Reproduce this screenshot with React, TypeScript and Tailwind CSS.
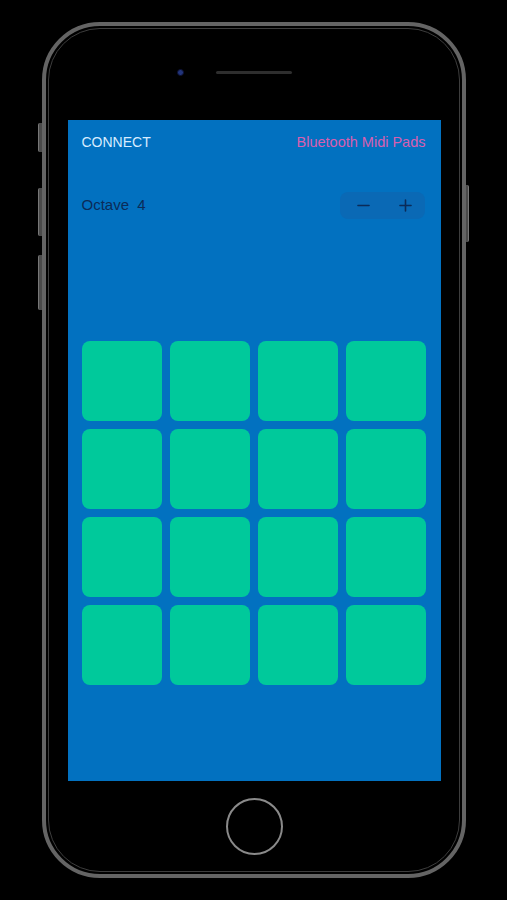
import { Minus, Plus } from 'lucide-react'

const PADS = Array.from({ length: 16 }, (_, i) => i)

export default function App() {
  return (
    <div className="w-[507px] h-[900px] bg-black flex pl-[42px] pt-[22px]" style={{ fontFamily: '"Liberation Sans", Arial, sans-serif' }}>
      <div className="relative w-[424px] h-[856px]">
        {/* side buttons */}
        <div className="absolute left-[-4px] top-[101px] w-[4px] h-[29px] rounded-l-[2px] bg-[#4a4a4a] border-l border-[#777]" />
        <div className="absolute left-[-4px] top-[166px] w-[4px] h-[48px] rounded-l-[2px] bg-[#4a4a4a] border-l border-[#777]" />
        <div className="absolute left-[-4px] top-[233px] w-[4px] h-[55px] rounded-l-[2px] bg-[#4a4a4a] border-l border-[#777]" />
        <div className="absolute right-[-3px] top-[163px] w-[3px] h-[57px] rounded-r-[2px] bg-[#4a4a4a] border-r border-[#777]" />

        {/* frame */}
        <div className="h-full rounded-[58px] border-[4px] border-[#646464] bg-black p-[2px]">
          <div className="h-full rounded-[52px] border border-[#3d3d3d] flex flex-col items-center">
            {/* top bezel */}
            <div className="h-[91px] pt-[40px] flex items-start gap-[32px]">
              <div className="w-[7px] h-[7px] rounded-full bg-[#22347a] border border-[#0c1030]" />
              <div className="mt-[2px] w-[76px] h-[3px] rounded-full bg-[#2e2e2e]" />
              <div className="w-[7px] h-[7px]" />
            </div>

            {/* screen */}
            <div className="w-[373px] h-[661px] bg-[#0271c0] pl-[14px] pr-[15px] pt-[13px]">
              <div className="flex items-center justify-between h-[18px] leading-[18px]">
                <span className="text-[14px] text-[#d8ecff]">CONNECT</span>
                <span className="text-[14.5px] text-[#d85fb0]">Bluetooth Midi Pads</span>
              </div>

              <div className="mt-[41px] flex items-center justify-between h-[27px]">
                <span className="text-[15px] text-[#0b2b58] whitespace-pre">Octave  4</span>
                <div className="flex h-[27px] w-[85px] rounded-[8px] bg-[#0a69b5] mr-[1px]">
                  <button className="flex-1 flex items-center justify-center pl-[5px] text-[#0b2b58]">
                    <Minus size={19} strokeWidth={2} />
                  </button>
                  <button className="flex-1 flex items-center justify-center pl-[5px] text-[#0b2b58]">
                    <Plus size={19} strokeWidth={2} />
                  </button>
                </div>
              </div>

              <div className="mt-[122px] grid grid-cols-4 gap-[8px] w-[344px]">
                {PADS.map((p) => (
                  <button key={p} className="h-[80px] rounded-[8px] bg-[#00c99b]" />
                ))}
              </div>
            </div>

            {/* bottom bezel */}
            <div className="pt-[17px]">
              <div className="w-[57px] h-[57px] rounded-full border-[2px] border-[#8a8a8a]" />
            </div>
          </div>
        </div>
      </div>
    </div>
  )
}
